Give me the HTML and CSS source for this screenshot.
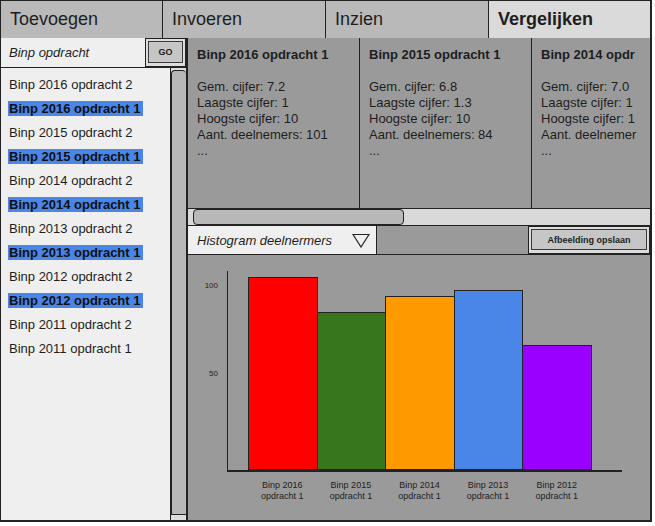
FILE: index.html
```html
<!DOCTYPE html>
<html lang="nl">
<head>
<meta charset="utf-8">
<title>Vergelijken</title>
<link rel="stylesheet" href="styles.css">
</head>
<body>
<div class="frame">
  <nav class="tabs">
    <div class="tab">Toevoegen</div>
    <div class="tab">Invoeren</div>
    <div class="tab">Inzien</div>
    <div class="tab active">Vergelijken</div>
  </nav>
  <div class="main">
    <aside class="side">
      <div class="search">
        <div class="search-input">Binp opdracht</div>
        <div class="btn go"><span class="btn-face">GO</span></div>
      </div>
      <div class="list-area">
        <ul class="list">
          <li>Binp 2016 opdracht 2</li>
          <li><span class="sel">Binp 2016 opdracht 1</span></li>
          <li>Binp 2015 opdracht 2</li>
          <li><span class="sel">Binp 2015 opdracht 1</span></li>
          <li>Binp 2014 opdracht 2</li>
          <li><span class="sel">Binp 2014 opdracht 1</span></li>
          <li>Binp 2013 opdracht 2</li>
          <li><span class="sel">Binp 2013 opdracht 1</span></li>
          <li>Binp 2012 opdracht 2</li>
          <li><span class="sel">Binp 2012 opdracht 1</span></li>
          <li>Binp 2011 opdracht 2</li>
          <li>Binp 2011 opdracht 1</li>
        </ul>
        <div class="vscroll"><div class="vthumb"></div></div>
      </div>
    </aside>
    <section class="content">
      <div class="cards">
        <div class="card">
          <div class="card-title">Binp 2016 opdracht 1</div>
          <div>Gem. cijfer: 7.2</div>
          <div>Laagste cijfer: 1</div>
          <div>Hoogste cijfer: 10</div>
          <div>Aant. deelnemers: 101</div>
          <div>...</div>
        </div>
        <div class="card">
          <div class="card-title">Binp 2015 opdracht 1</div>
          <div>Gem. cijfer: 6.8</div>
          <div>Laagste cijfer: 1.3</div>
          <div>Hoogste cijfer: 10</div>
          <div>Aant. deelnemers: 84</div>
          <div>...</div>
        </div>
        <div class="card">
          <div class="card-title">Binp 2014 opdr</div>
          <div>Gem. cijfer: 7.0</div>
          <div>Laagste cijfer: 1</div>
          <div>Hoogste cijfer: 1</div>
          <div>Aant. deelnemer</div>
          <div>...</div>
        </div>
      </div>
      <div class="hscroll"><div class="hthumb"></div></div>
      <div class="toolbar">
        <div class="select">
          <span>Histogram deelnermers</span>
          <svg class="caret" width="18" height="15" viewBox="0 0 18 15"><polygon points="1,1.5 17,1.5 9,14" fill="none" stroke="#222" stroke-width="1.2"/></svg>
        </div>
        <div class="btn save"><span class="btn-face">Afbeelding opslaan</span></div>
      </div>
      <div class="chart">
        <div class="yaxis">
          <span class="tick" style="top:10px">100</span>
          <span class="tick" style="top:98px">50</span>
        </div>
        <div class="plot-col">
          <div class="plot">
            <div class="bar red" style="height:193px"></div>
            <div class="bar green" style="height:158px"></div>
            <div class="bar orange" style="height:174px"></div>
            <div class="bar blue" style="height:180px"></div>
            <div class="bar purple" style="height:125px"></div>
          </div>
          <div class="xlabels">
            <div class="xlabel">Binp 2016<br>opdracht 1</div>
            <div class="xlabel">Binp 2015<br>opdracht 1</div>
            <div class="xlabel">Binp 2014<br>opdracht 1</div>
            <div class="xlabel">Binp 2013<br>opdracht 1</div>
            <div class="xlabel">Binp 2012<br>opdracht 1</div>
          </div>
        </div>
      </div>
    </section>
  </div>
</div>
</body>
</html>
```
FILE: styles.css
```css
* { box-sizing: border-box; margin: 0; padding: 0; }

body {
  margin: 0;
  background: #ffffff;
  font-family: "Liberation Sans", Arial, sans-serif;
  color: #1e1e1e;
}

.frame {
  width: 652px;
  height: 522px;
  border: 1px solid #222;
  border-right-width: 2px;
  border-bottom-width: 2px;
  display: flex;
  flex-direction: column;
  overflow: hidden;
}

/* Tabs */
.tabs {
  display: grid;
  grid-template-columns: 161px 163px 163px 1fr;
  height: 37px;
  border-bottom: 1px solid #222;
}
.tab {
  background: #b9b9b9;
  font-size: 18px;
  line-height: 37px;
  padding-left: 9px;
}
.tab + .tab { border-left: 1px solid #222; }
.tab.active { background: #dadada; font-weight: bold; }

.main { flex: 1; display: flex; min-height: 0; }

/* Side panel */
.side {
  width: 187px;
  border-right: 2px solid #222;
  background: #efefef;
  display: flex;
  flex-direction: column;
}
.search {
  display: flex;
  height: 30px;
  border-bottom: 1px solid #222;
}
.search-input {
  width: 144px;
  font-size: 13px;
  font-style: italic;
  line-height: 29px;
  padding-left: 8px;
}
.btn {
  border: 1px solid #222;
  background: #dcdcdc;
  padding: 2px 2px 3px 2px;
  display: flex;
}
.btn-face {
  flex: 1;
  border: 1px solid #3a3a3a;
  background: #c6c6c6;
  display: flex;
  align-items: center;
  justify-content: center;
  font-weight: bold;
  font-size: 9px;
  color: #222;
}
.go { flex: 1; }

.list-area { flex: 1; display: flex; min-height: 0; }
.list {
  flex: 1;
  list-style: none;
  padding: 5px 0 0 8px;
  font-size: 13px;
  line-height: 24px;
  white-space: nowrap;
}
.sel {
  background: #4a86e8;
  font-weight: bold;
  color: #111;
  padding: 0 3px 0 1px;
  margin-left: -1px;
}
.vscroll {
  width: 16px;
  border-left: 1px solid #222;
  background: #dcdcdc;
  padding: 2px 0 5px 0;
  display: flex;
}
.vthumb {
  flex: 1;
  background: #b8b8b8;
  border: 1px solid #222;
  border-right: none;
  border-radius: 4px 4px 0 0;
}

/* Content */
.content {
  flex: 1;
  min-width: 0;
  display: flex;
  flex-direction: column;
  background: #9a9a9a;
}
.cards {
  height: 170px;
  display: flex;
  overflow: hidden;
}
.card {
  flex: 0 0 172px;
  border-right: 1px solid #222;
  padding: 9px;
  font-size: 13px;
  line-height: 16px;
  white-space: nowrap;
  overflow: hidden;
}
.card-title { font-weight: bold; margin-bottom: 16px; }

.hscroll {
  height: 18px;
  border-top: 1px solid #222;
  border-bottom: 1px solid #222;
  background: #d9d9d9;
  padding-left: 5px;
}
.hthumb {
  width: 211px;
  height: 16px;
  background: #b8b8b8;
  border: 1px solid #222;
  border-radius: 4px;
}

.toolbar {
  height: 29px;
  border-bottom: 1px solid #222;
  display: flex;
  justify-content: space-between;
}
.select {
  width: 189px;
  background: #efefef;
  border-right: 1px solid #222;
  display: flex;
  align-items: center;
  justify-content: space-between;
  padding: 0 6px 0 9px;
  font-size: 13px;
  font-style: italic;
}
.caret { display: block; }
.save { width: 122px; }

/* Chart */
.chart {
  flex: 1;
  display: flex;
  padding-top: 16px;
}
.yaxis {
  width: 39px;
  position: relative;
}
.tick {
  position: absolute;
  right: 9px;
  font-size: 8px;
  line-height: 10px;
  color: #222;
}
.plot-col { width: 395px; }
.plot {
  height: 201px;
  border-left: 1px solid #222;
  border-bottom: 2px solid #222;
  display: flex;
  align-items: flex-end;
  padding-left: 20px;
}
.bar {
  width: 69.6px;
  border: 1px solid #222;
}
.bar + .bar { margin-left: -1px; }
.red { background: #ff0000; }
.green { background: #38761d; }
.orange { background: #ff9900; }
.blue { background: #4a86e8; }
.purple { background: #9900ff; }

.xlabels {
  display: flex;
  padding-left: 21px;
  margin-top: 8px;
}
.xlabel {
  width: 68.6px;
  text-align: center;
  font-size: 9px;
  line-height: 11px;
  color: #222;
}
```
